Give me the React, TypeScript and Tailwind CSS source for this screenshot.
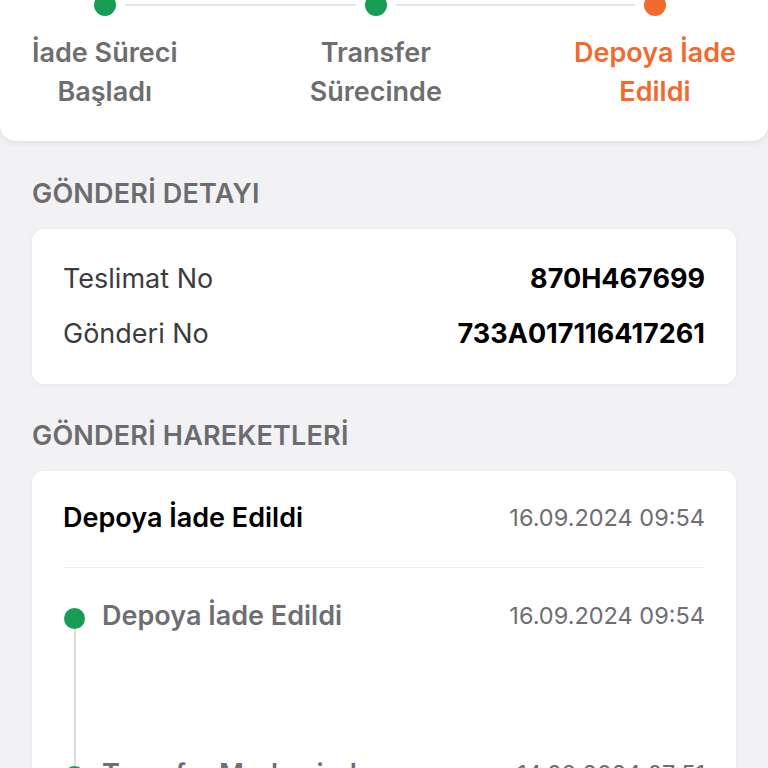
const steps = [
  { lines: ["İade Süreci", "Başladı"], done: true, active: false },
  { lines: ["Transfer", "Sürecinde"], done: true, active: false },
  { lines: ["Depoya İade", "Edildi"], done: false, active: true },
];

const movements = [
  { title: "Depoya İade Edildi", date: "16.09.2024 09:54" },
  { title: "Transfer Merkezinde", date: "14.09.2024 07:51" },
  { title: "İade Süreci Başladı", date: "12.09.2024 15:20" },
];

const Dot = ({ active }: { active: boolean }) => (
  <span
    className={
      active
        ? "block w-[22px] h-[22px] rounded-full bg-[#f26a2d] shrink-0"
        : "block w-[22px] h-[22px] rounded-full bg-[#179c54] shrink-0"
    }
  />
);

const Stepper = () => (
  <div className="bg-white rounded-b-2xl shadow-[0_2px_6px_rgba(0,0,0,0.08)] overflow-hidden">
    <div className="-mt-[6px] px-8 pb-[30px] grid grid-cols-[auto_1fr_auto_1fr_auto] items-center">
      {steps.map((step, i) => (
        <>
          <div key={"d" + i} className="flex items-center h-[22px]">
            <span className={i === 0 ? "flex-1 h-[2px]" : "flex-1 h-[2px] bg-[#e6e6e8]"} />
            <span className="mx-[9px]">
              <Dot active={step.active} />
            </span>
            <span className={i === steps.length - 1 ? "flex-1 h-[2px]" : "flex-1 h-[2px] bg-[#e6e6e8]"} />
          </div>
          {i < steps.length - 1 && <div key={"l" + i} className="h-[2px] bg-[#e6e6e8]" />}
        </>
      ))}
      {steps.map((step, i) => (
        <>
          <div
            key={"t" + i}
            className={
              step.active
                ? "mt-[17px] text-center text-[27px] leading-[39px] font-semibold text-[#f26a2d]"
                : "mt-[17px] text-center text-[27px] leading-[39px] font-semibold text-[#6e6e70]"
            }
          >
            {step.lines[0]}
            <br />
            {step.lines[1]}
          </div>
          {i < steps.length - 1 && <div key={"s" + i} />}
        </>
      ))}
    </div>
  </div>
);

const SectionTitle = ({ children }: { children: string }) => (
  <h2 className="px-8 text-[27px] leading-[32px] font-semibold text-[#6c6c70] tracking-[0.2px]">
    {children}
  </h2>
);

export default function App() {
  return (
    <div className="min-h-screen bg-[#f2f2f4] font-['Inter','Noto_Sans',sans-serif] overflow-hidden">
      <Stepper />

      <div className="mt-[37px] mb-[19px]">
        <SectionTitle>GÖNDERİ DETAYI</SectionTitle>
      </div>
      <div className="mx-8 bg-white rounded-xl shadow-[0_1px_4px_rgba(0,0,0,0.06)] px-[31px] pt-[32px] pb-[32px] flex flex-col gap-[19px]">
        <div className="flex justify-between items-center text-[27px] leading-[36px]">
          <span className="text-[#3c3c40]">Teslimat No</span>
          <span className="font-bold text-black">870H467699</span>
        </div>
        <div className="flex justify-between items-center text-[27px] leading-[36px]">
          <span className="text-[#3c3c40]">Gönderi No</span>
          <span className="font-bold text-black">733A017116417261</span>
        </div>
      </div>

      <div className="mt-[36px] mb-[19px]">
        <SectionTitle>GÖNDERİ HAREKETLERİ</SectionTitle>
      </div>
      <div className="mx-8 bg-white rounded-xl shadow-[0_1px_4px_rgba(0,0,0,0.06)] px-[31px]">
        <div className="pt-[29px] pb-[31px] border-b border-[#f0f0f2] flex justify-between items-center">
          <span className="text-[27px] leading-[36px] font-semibold text-black">Depoya İade Edildi</span>
          <span className="text-[23.5px] leading-[36px] text-[#6e6e73]">16.09.2024 09:54</span>
        </div>
        <div className="pt-[30px] pb-8">
          {movements.map((m, i) => (
            <div key={i} className="flex min-h-[158px]">
              <div className="w-[21px] flex flex-col items-center ml-[1px]">
                <span className={i === 0 ? "w-[2px] h-[10px]" : "w-[2px] h-[10px] bg-[#dedee0]"} />
                <span className="block w-[21px] h-[21px] rounded-full bg-[#179c54]" />
                {i < movements.length - 1 && <span className="w-[2px] flex-1 bg-[#dedee0]" />}
              </div>
              <div className="flex-1 ml-[17px] flex justify-between items-start">
                <span className="text-[27px] leading-[36px] font-semibold text-[#6e6e73]">{m.title}</span>
                <span className="text-[23.5px] leading-[36px] text-[#6e6e73]">{m.date}</span>
              </div>
            </div>
          ))}
        </div>
      </div>
    </div>
  );
}
